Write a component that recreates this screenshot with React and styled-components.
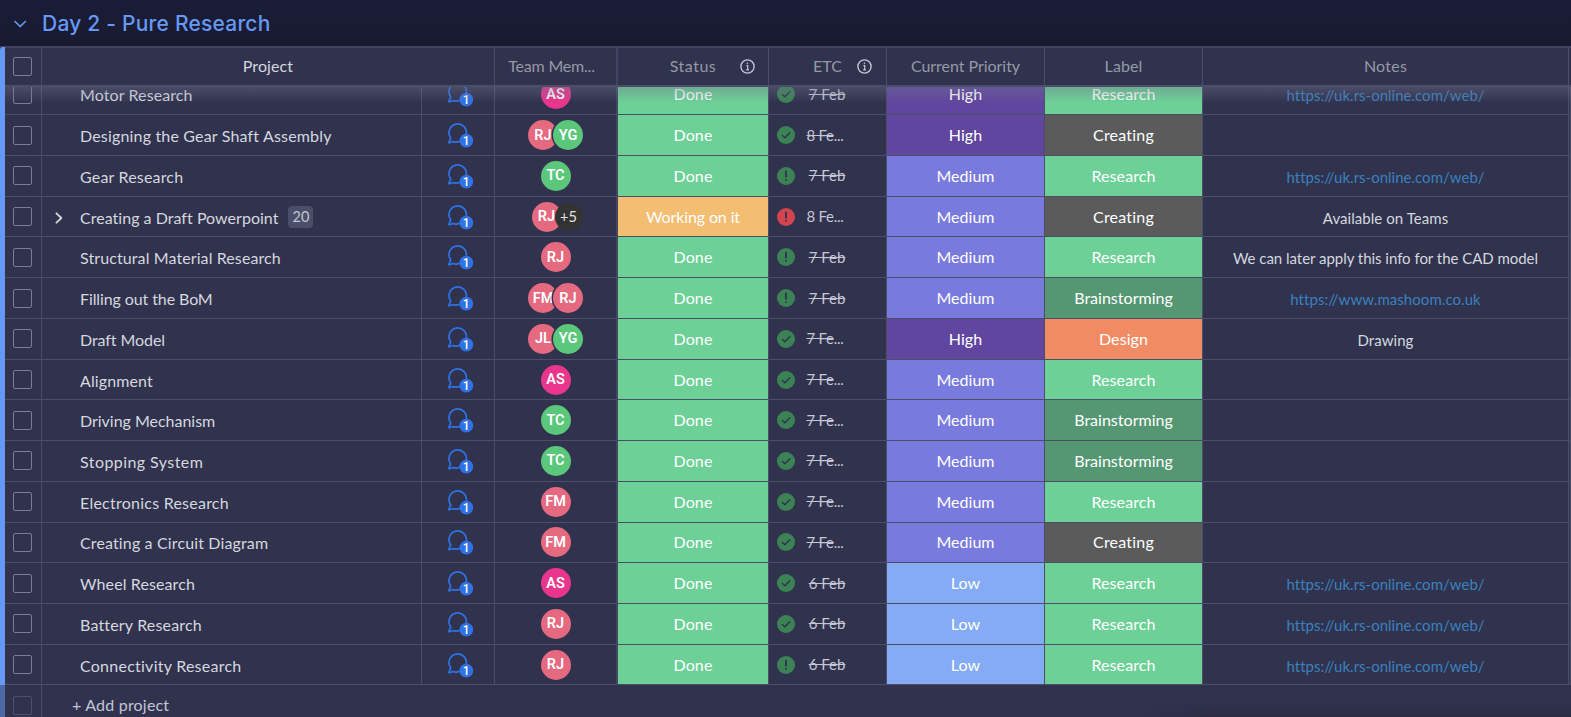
import React from "react";
import styled, { createGlobalStyle, css } from "styled-components";

const GlobalStyle = createGlobalStyle`
  * { box-sizing: border-box; }
  body {
    margin: 0;
    background: #181b34;
    overflow: hidden;
  }
`;

const line = "#4b4e69";
const panel = "#30324e";
const columns = "5px 37px 380px 73px 123px 151px 118px 158px 158px 366px 1fr";

const Board = styled.main`
  display: flex;
  flex-direction: column;
  height: 717px;
  overflow: hidden;
  background: ${panel};
  color: #d5d8df;
  font: 400 16px/1 Lato, "Liberation Sans", sans-serif;
`;

const GroupBar = styled.header`
  display: flex;
  flex: none;
  align-items: center;
  gap: 15px;
  height: 46px;
  padding: 2px 0 0 13px;
  background: linear-gradient(#1a1d36, #181a30);
  color: #6699f5;
`;

const GroupTitle = styled.h1`
  margin: 0;
  font: 500 21px/30px Inter, sans-serif;
  letter-spacing: 0.22px;
`;

const HeaderRow = styled.div`
  display: grid;
  flex: none;
  grid-template-columns: 5px 37px 453px 123px 151px 118px 158px 158px 366px 1fr;
  height: 41px;
  border-top: 2px solid #404260;
  border-bottom: 2px solid ${line};
  background: ${panel};
`;

const Accent = styled.div`
  background: ${(p) => (p.$faded ? "#4d6aa5" : "#6699f5")};
  margin: ${(p) => (p.$header ? "-1px 0 -2px" : "0 0 -1px")};
  border-top-left-radius: ${(p) => (p.$header ? "3px" : "0")};
`;

const Cell = styled.div`
  display: flex;
  align-items: center;
  justify-content: center;
  min-width: 0;
  border-right: 1px solid ${line};
  white-space: nowrap;
`;

const SelectCell = styled(Cell)`
  padding-right: 1px;
`;

const TeamCell = styled(Cell)`
  border-right: 2px solid #434562;
`;

const HeadCell = styled(Cell)`
  position: relative;
  padding: 0 ${(p) => p.$shift || "0"} ${(p) => (p.$box ? "0" : "1px")} 0;
  border-right: ${(p) => (p.$wide ? "2px solid #434562" : `1px solid ${line}`)};
  color: ${(p) => (p.$strong ? "#d5d8df" : "#9699a6")};
  letter-spacing: ${(p) => p.$ls || "0.1px"};
`;

const InfoSlot = styled.span`
  position: absolute;
  right: ${(p) => p.$right};
  top: 11px;
  display: flex;
  color: #c3c6d4;
`;

const Body = styled.section`
  position: relative;
  flex: 1;
  overflow: hidden;
`;

const ScrollShade = styled.div`
  position: absolute;
  inset: 0 0 auto 5px;
  height: 16px;
  background: linear-gradient(rgba(112, 114, 140, 0.4), rgba(112, 114, 140, 0));
`;

const FooterShade = styled.div`
  position: absolute;
  inset: auto 0 0 1140px;
  height: 16px;
  background: linear-gradient(90deg, ${panel}, transparent 70px),
    linear-gradient(rgba(42, 43, 66, 0), #2b2c43);
`;

const Rows = styled.div`
  margin-top: -12.4px;
`;

const Row = styled.div`
  display: grid;
  grid-template-columns: ${columns};
  height: 40.72px;

  ${Cell} {
    border-bottom: 1px solid ${line};
  }
`;

const Checkbox = styled.span`
  width: 19px;
  height: 19px;
  border: 1px solid #797e93;
  border-radius: 2px;
  opacity: ${(p) => (p.$faded ? 0.4 : 1)};
`;

const NameCell = styled(Cell)`
  justify-content: flex-start;
  padding: 2px 0 0 11px;
`;

const Toggle = styled.span`
  display: flex;
  width: 27px;
  color: #d5d8df;
`;

const Name = styled.span`
  letter-spacing: ${(p) => p.$ls || "0.1px"};
`;

const Count = styled.span`
  margin: -1px 0 0 10px;
  padding: 0 4px;
  border-radius: 4px;
  background: #4b4e69;
  color: #c3c6d4;
  font-size: 14.5px;
  line-height: 22px;
`;

const Avatar = styled.span`
  display: flex;
  flex: none;
  align-items: center;
  justify-content: center;
  width: 30px;
  height: 30px;
  padding-top: 1px;
  border-radius: 50%;
  background: ${(p) => p.$color};
  color: #fff;
  font: 600 14.5px/16px Roboto, sans-serif;
  ${(p) =>
    p.$stacked &&
    css`
      margin-left: -5px;
      box-shadow: 0 0 0 1.5px ${panel};
    `}
  ${(p) =>
    p.$more &&
    css`
      margin: 0 -3px 0 -7px;
      width: 28px;
      height: 28px;
      font: 400 14.5px/16px Lato, sans-serif;
      color: #e2e2e2;
      box-shadow: none;
    `}
`;

const Fill = styled(Cell)`
  background: ${(p) => p.$color};
  background-clip: padding-box;
  color: #fff;
  letter-spacing: ${(p) => p.$ls || "0.1px"};
`;

const DateCell = styled(Cell)`
  justify-content: flex-start;
  padding-left: 8px;
`;

const DateText = styled.span`
  width: 46px;
  margin-left: ${(p) => (p.$cut ? "7px" : "9px")};
  font-size: 15px;
  color: #c5c7d4;
  text-align: center;
  letter-spacing: ${(p) => (p.$cut ? "-0.25px" : "0")};
`;

const Struck = styled.span`
  text-decoration: ${(p) => (p.$on ? "line-through" : "none")};
`;

const Note = styled(Cell)`
  padding-top: 3px;
  font-size: 15px;
  color: ${(p) => (p.$link ? "#3b81bd" : "#d5d8df")};
  letter-spacing: ${(p) => p.$ls || "0.06px"};
`;

const AddRow = styled.div`
  display: grid;
  grid-template-columns: 5px 37px 1fr;
  height: 41px;
`;

const AddLabel = styled.div`
  display: flex;
  align-items: center;
  padding: 0 0 1px 30px;
  color: #c3c6d4;
  letter-spacing: 0.2px;
`;

const Chevron = ({ right }) => (
  <svg width={right ? 12 : 14} height="14" viewBox="0 0 14 14" fill="none" stroke="currentColor" strokeWidth={right ? 2.1 : 1.7} strokeLinecap="round" strokeLinejoin="round">
    <path d={right ? "M4 1.5l5.8 5.5L4 12.5" : "M2 4.5l5.2 5 5.2-5"} />
  </svg>
);

const InfoIcon = () => (
  <svg width="15" height="15" viewBox="0 0 15 15" fill="none" stroke="currentColor" strokeWidth="1.4">
    <circle cx="7.5" cy="7.5" r="6.6" />
    <path d="M6.4 6.7h1.3v4M6.2 10.8h2.8" strokeWidth="1.2" />
    <circle cx="7.4" cy="4.3" r=".5" fill="currentColor" strokeWidth=".7" />
  </svg>
);

const BubbleText = styled.text`
  font: 500 12px Roboto, sans-serif;
  fill: #fff;
`;

const Bubble = () => (
  <svg width="29" height="26" viewBox="0 0 29 26" fill="none">
    <path
      d="M22.1 12.9A8.7 8.7 0 1 0 6.8 15.9C6.2 17.3 5.4 18.9 4.9 20.1C4.7 20.6 5 20.9 5.5 20.7L8.1 19.7C9.8 19.2 10.6 20.6 12.4 20.1L16 19.3"
      stroke="#2f72e4"
      strokeWidth="1.7"
      strokeLinejoin="round"
    />
    <circle cx="22.3" cy="18.6" r="6.9" fill="#2f72e4" />
    <BubbleText x="22.1" y="22.9" textAnchor="middle">1</BubbleText>
  </svg>
);

const DueIcon = ({ kind }) => (
  <svg width="18" height="18" viewBox="0 0 18 18" fill="none" stroke={panel} strokeWidth="1.6" strokeLinecap="round">
    <circle cx="9" cy="9" r="9" fill={kind === "late" ? "#d2454f" : "#3b8354"} stroke="none" />
    {kind === "ok" ? (
      <path d="M5.4 9.4l2.5 2.4 4.9-5" strokeLinejoin="round" strokeWidth="1.4" />
    ) : (
      <path d="M9 4.4v5.4M9 12.8v.2" strokeWidth="1.8" />
    )}
  </svg>
);

const people = {
  AS: "#e9358b",
  RJ: "#e5697f",
  FM: "#e5697f",
  JL: "#e5697f",
  YG: "#5ac77b",
  TC: "#5ac77b",
  "+5": "#333333",
};

const fills = {
  Done: "#6dd197",
  "Working on it": "#f3bd72",
  High: "#61469f",
  Medium: "#787add",
  Low: "#85abf5",
  Research: "#6dd197",
  Creating: "#5b5b5b",
  Brainstorming: "#549772",
  Design: "#f08b64",
};

const shop = "https://uk.rs-online.com/web/";

const spacing = {
  "Designing the Gear Shaft Assembly": "0.17px",
  "Gear Research": "0.18px",
  "Creating a Draft Powerpoint": "0.03px",
  "Filling out the BoM": "-0.1px",
  "Draft Model": "-0.08px",
  "Driving Mechanism": "-0.02px",
  "Stopping System": "0.43px",
  "Electronics Research": "0.24px",
  "Creating a Circuit Diagram": "0.14px",
  "Battery Research": "0.18px",
  "Connectivity Research": "0.25px",
  "Working on it": "-0.12px",
  Medium: "0.01px",
  Creating: "0.2px",
  Brainstorming: "0.02px",
  "We can later apply this info for the CAD model": "-0.03px",
  [shop]: "0.01px",
};

const items = [
  ["Motor Research", ["AS"], "ok", "7 Feb", "High", "Research", shop],
  ["Designing the Gear Shaft Assembly", ["RJ", "YG"], "ok", "8 Fe...", "High", "Creating", ""],
  ["Gear Research", ["TC"], "warn", "7 Feb", "Medium", "Research", shop],
  ["Creating a Draft Powerpoint", ["RJ", "+5"], "late", "8 Fe...", "Medium", "Creating", "Available on Teams"],
  ["Structural Material Research", ["RJ"], "warn", "7 Feb", "Medium", "Research", "We can later apply this info for the CAD model"],
  ["Filling out the BoM", ["FM", "RJ"], "warn", "7 Feb", "Medium", "Brainstorming", "https://www.mashoom.co.uk"],
  ["Draft Model", ["JL", "YG"], "ok", "7 Fe...", "High", "Design", "Drawing"],
  ["Alignment", ["AS"], "ok", "7 Fe...", "Medium", "Research", ""],
  ["Driving Mechanism", ["TC"], "ok", "7 Fe...", "Medium", "Brainstorming", ""],
  ["Stopping System", ["TC"], "ok", "7 Fe...", "Medium", "Brainstorming", ""],
  ["Electronics Research", ["FM"], "ok", "7 Fe...", "Medium", "Research", ""],
  ["Creating a Circuit Diagram", ["FM"], "ok", "7 Fe...", "Medium", "Creating", ""],
  ["Wheel Research", ["AS"], "ok", "6 Feb", "Low", "Research", shop],
  ["Battery Research", ["RJ"], "ok", "6 Feb", "Low", "Research", shop],
  ["Connectivity Research", ["RJ"], "warn", "6 Feb", "Low", "Research", shop],
];

function DueDate({ kind, text }) {
  const cut = text.endsWith("...");
  const shown = cut ? text.slice(0, -3) : text;
  return (
    <DateCell>
      <DueIcon kind={kind} />
      <DateText $cut={cut}>
        <Struck $on={kind !== "late"}>{shown}</Struck>
        {cut && "..."}
      </DateText>
    </DateCell>
  );
}

function ProjectRow({ item }) {
  const [name, team, kind, date, priority, label, note] = item;
  const expandable = kind === "late";
  const status = expandable ? "Working on it" : "Done";
  return (
    <Row>
      <Accent />
      <SelectCell><Checkbox /></SelectCell>
      <NameCell>
        <Toggle>{expandable && <Chevron right />}</Toggle>
        <Name $ls={spacing[name]}>{name}</Name>
        {expandable && <Count>20</Count>}
      </NameCell>
      <Cell><Bubble /></Cell>
      <TeamCell>
        {team.map((who, i) => (
          <Avatar key={who} $color={people[who]} $stacked={i > 0} $more={who === "+5"}>{who}</Avatar>
        ))}
      </TeamCell>
      <Fill $color={fills[status]} $ls={spacing[status]}>{status}</Fill>
      <DueDate kind={kind} text={date} />
      <Fill $color={fills[priority]} $ls={spacing[priority]}>{priority}</Fill>
      <Fill $color={fills[label]} $ls={spacing[label]}>{label}</Fill>
      <Note $link={note.startsWith("http")} $ls={spacing[note]}>{note}</Note>
      <Cell />
    </Row>
  );
}

export default function App() {
  return (
    <>
      <GlobalStyle />
      <Board>
        <GroupBar>
          <Chevron />
          <GroupTitle>Day 2 - Pure Research</GroupTitle>
        </GroupBar>
        <HeaderRow>
          <Accent $header />
          <HeadCell $box $shift="1px"><Checkbox /></HeadCell>
          <HeadCell $strong>Project</HeadCell>
          <HeadCell $wide $shift="8px" $ls="-0.2px">Team Mem...</HeadCell>
          <HeadCell $ls="0.5px">Status<InfoSlot $right="13px"><InfoIcon /></InfoSlot></HeadCell>
          <HeadCell>ETC<InfoSlot $right="14px"><InfoIcon /></InfoSlot></HeadCell>
          <HeadCell $ls="-0.04px">Current Priority</HeadCell>
          <HeadCell>Label</HeadCell>
          <HeadCell $ls="0.25px">Notes</HeadCell>
        </HeaderRow>
        <Body>
          <Rows>
            {items.map((item) => <ProjectRow key={item[0]} item={item} />)}
            <AddRow>
              <Accent $faded />
              <SelectCell><Checkbox $faded /></SelectCell>
              <AddLabel>+ Add project</AddLabel>
            </AddRow>
          </Rows>
          <ScrollShade />
          <FooterShade />
        </Body>
      </Board>
    </>
  );
}
